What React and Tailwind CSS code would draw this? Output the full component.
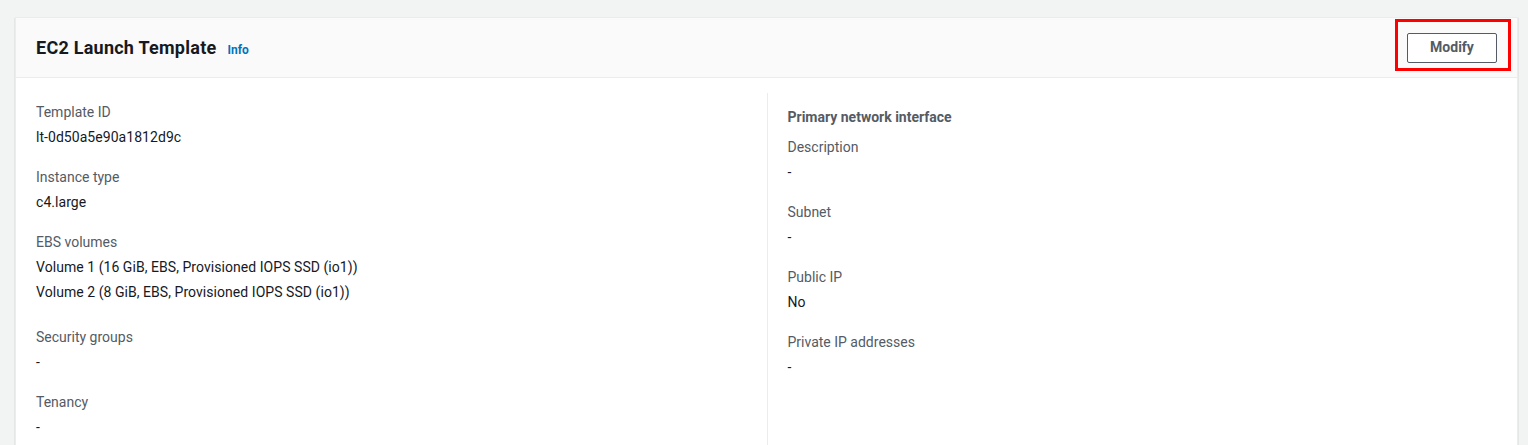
export default function App() {
  const left = [
    { label: 'Template ID', values: ['lt-0d50a5e90a1812d9c'] },
    { label: 'Instance type', values: ['c4.large'] },
    { label: 'EBS volumes', values: ['Volume 1 (16 GiB, EBS, Provisioned IOPS SSD (io1))', 'Volume 2 (8 GiB, EBS, Provisioned IOPS SSD (io1))'], extra: true },
    { label: 'Security groups', values: ['-'] },
    { label: 'Tenancy', values: ['-'] },
  ]
  const right = [
    { label: 'Description', values: ['-'] },
    { label: 'Subnet', values: ['-'] },
    { label: 'Public IP', values: ['No'] },
    { label: 'Private IP addresses', values: ['-'] },
  ]

  const Field = ({ f }) => (
    <div className={f.extra ? 'mb-[23px]' : 'mb-[18px]'}>
      <div className="text-[14px] leading-[22px] text-[#545b64] mb-[3px]">{f.label}</div>
      {f.values.map(v => (
        <div key={v} className="text-[14px] leading-[22px] tracking-[0.05px] text-[#16191f] mb-[3px] last:mb-0">{v}</div>
      ))}
    </div>
  )

  return (
    <div className="min-h-[445px] bg-[#f2f3f3] pt-[17px] overflow-hidden" style={{ fontFamily: 'Roboto, "Liberation Sans", Arial, sans-serif' }}>
      <div className="ml-[15px] w-[1503px] bg-white border border-[#eaeded] shadow-[0_1px_1px_0_rgba(0,28,36,0.3)] relative">
        {/* header */}
        <div className="h-[60px] bg-[#fafafa] border-b border-[#eaeded] flex items-center justify-between pl-[20px] pr-[20px]">
          <div className="flex items-baseline gap-[11px]">
            <h2 className="text-[18px] font-bold tracking-[0.25px] text-[#16191f] leading-[24px]">EC2 Launch Template</h2>
            <a className="text-[12px] font-bold text-[#0073bb] cursor-pointer">Info</a>
          </div>
          <button className="w-[90px] h-[30px] border border-[#545b64] rounded-[2px] bg-white text-[14px] font-bold text-[#545b64]">Modify</button>
        </div>
        <div className="absolute left-[1379px] top-[1px] w-[116px] h-[52px] border-[3px] border-[#ff0000] pointer-events-none" />

        {/* body */}
        <div className="grid grid-cols-2 pt-[15px] px-[20px] pb-[20px]">
          <div className="pt-[8px] pr-[20px]">
            {left.map(f => <Field key={f.label} f={f} />)}
          </div>
          <div className="border-l border-[#eaeded] pl-[20px] pt-[13px]">
            <div className="text-[14px] font-bold leading-[22px] text-[#545b64] mb-[8px]">Primary network interface</div>
            {right.map(f => <Field key={f.label} f={f} />)}
          </div>
        </div>
      </div>
    </div>
  )
}
